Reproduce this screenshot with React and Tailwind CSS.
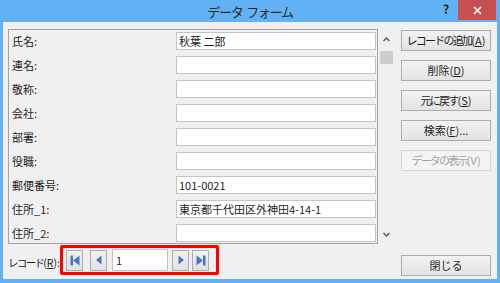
import React from "react";

const font = "font-['Noto_Sans_CJK_JP','Noto_Sans',sans-serif]";

const fields = [
  { label: "氏名:", value: "秋葉 二郎" },
  { label: "連名:", value: "" },
  { label: "敬称:", value: "" },
  { label: "会社:", value: "" },
  { label: "部署:", value: "" },
  { label: "役職:", value: "" },
  { label: "郵便番号:", value: "101-0021" },
  { label: "住所_1:", value: "東京都千代田区外神田4-14-1" },
  { label: "住所_2:", value: "" },
];

const Key = ({ children }) => <span className="underline underline-offset-1">{children}</span>;

// Japanese parts are narrower in the original UI font
const J = ({ children }) => <span className="tracking-[-0.16em]">{children}</span>;

const Button = ({ children, disabled }) => (
  <button
    className={
      disabled
        ? "h-[21px] w-[90px] whitespace-nowrap border border-[#d5d5d5] bg-[#f4f4f4] text-[11px] leading-none text-[#a3a3a3]"
        : "h-[21px] w-[90px] whitespace-nowrap border border-[#acacac] bg-gradient-to-b from-[#f2f2f2] to-[#e3e3e3] text-[11px] leading-none text-[#1e1e1e]"
    }
  >
    {children}
  </button>
);

const NavButton = ({ children }) => (
  <button className="flex h-[21px] w-[17px] items-center justify-center border border-[#acacac] bg-gradient-to-b from-[#f2f2f2] to-[#e1e1e1]">
    {children}
  </button>
);

const Chevron = ({ up }) => (
  <svg width="7" height="5" viewBox="0 0 7 5">
    <path
      d={up ? "M0.5 4 L3.5 1 L6.5 4" : "M0.5 1 L3.5 4 L6.5 1"}
      fill="none"
      stroke="#5a5a5a"
      strokeWidth="1.4"
    />
  </svg>
);

export default function App() {
  return (
    <div className={`flex h-[283px] w-[500px] flex-col bg-[#62b1f4] ${font}`}>
      {/* title bar */}
      <div className="relative flex h-[22px] shrink-0 items-center justify-center">
        <span className="flex gap-[4px] text-[13px] leading-none text-[#2a2a2a] tracking-[-0.1em]">
          <span>データ</span>
          <span>フォーム</span>
        </span>
        <span className="absolute left-[443px] top-[3px] text-[12px] font-bold leading-none text-[#222]">?</span>
        <div className="absolute left-[458px] top-0 flex h-[20px] w-[38px] items-center justify-center bg-[#c75050]">
          <svg width="9" height="9" viewBox="0 0 9 9">
            <path d="M1 1 L8 8 M8 1 L1 8" stroke="#fff" strokeWidth="1.6" />
          </svg>
        </div>
      </div>

      {/* body */}
      <div className="mx-[3px] mb-[4px] flex flex-1 bg-[#f0f0f0] pl-[5px] pt-[7px]">
        <div className="flex w-[393px] flex-col">
          <div className="flex">
            <div className="flex h-[215px] w-[370px] flex-col gap-[6px] border border-[#a3a3a3] pt-[2px] pl-[3px] pr-[1px]">
              {fields.map((f) => (
                <div key={f.label} className="flex h-[18px] items-center">
                  <span className="w-[164px] text-[11px] leading-none text-[#1e1e1e]">{f.label}</span>
                  <div className="flex h-[18px] w-[200px] items-center border border-[#c4c4c4] bg-white pl-[2px] text-[11px] leading-none text-[#1e1e1e]">
                    {f.value}
                  </div>
                </div>
              ))}
            </div>
            <div className="flex w-[16px] flex-col items-center pl-[1px]">
              <div className="mt-[7px] flex h-[6px] items-center">
                <Chevron up />
              </div>
              <div className="mt-[9px] h-[13px] w-[13px] bg-[#cdcdcd]" />
              <div className="flex-1" />
              <div className="mb-[7px] flex h-[6px] items-center">
                <Chevron />
              </div>
            </div>
          </div>

          <div className="mt-[1px] flex items-start">
            <span className="mt-[13px] w-[52px] shrink-0 whitespace-nowrap text-[10.5px] leading-none text-[#1e1e1e]">
              <J>レコード</J>(<Key>R</Key>):
            </span>
            <div className="flex h-[30px] w-[159px] items-center rounded-[2px] border-[3px] border-[#ff0000] pl-[3px]">
              <NavButton>
                <svg width="10" height="11" viewBox="0 0 10 11">
                  <rect x="0.5" y="0.5" width="2.5" height="10" fill="#3d7dbf" />
                  <path d="M9.5 0.5 L3 5.5 L9.5 10.5 Z" fill="#3d7dbf" />
                </svg>
              </NavButton>
              <div className="ml-[7px]">
                <NavButton>
                  <svg width="8" height="10" viewBox="0 0 8 10">
                    <path d="M6.5 0.5 L1 5 L6.5 9.5 Z" fill="#3d7dbf" />
                  </svg>
                </NavButton>
              </div>
              <div className="ml-[5px] flex h-[22px] w-[56px] items-center border border-[#c4c4c4] bg-white pl-[3px] text-[11px] leading-none text-[#1e1e1e]">
                1
              </div>
              <div className="ml-[4px]">
                <NavButton>
                  <svg width="8" height="10" viewBox="0 0 8 10">
                    <path d="M1.5 0.5 L7 5 L1.5 9.5 Z" fill="#3d7dbf" />
                  </svg>
                </NavButton>
              </div>
              <div className="ml-[3px]">
                <NavButton>
                  <svg width="10" height="11" viewBox="0 0 10 11">
                    <path d="M0.5 0.5 L7 5.5 L0.5 10.5 Z" fill="#3d7dbf" />
                    <rect x="7" y="0.5" width="2.5" height="10" fill="#3d7dbf" />
                  </svg>
                </NavButton>
              </div>
            </div>
          </div>
        </div>

        {/* right buttons */}
        <div className="flex flex-col pt-[1px]">
          <div className="flex flex-col gap-[9px]">
            <Button>
              <J>レコードの追加</J>(<Key>A</Key>)
            </Button>
            <Button>
              削除(<Key>D</Key>)
            </Button>
            <Button>
              <J>元に戻す</J>(<Key>S</Key>)
            </Button>
            <Button>
              検索(<Key>F</Key>)...
            </Button>
            <Button disabled>
              <J>データの表示</J>(V)
            </Button>
          </div>
          <div className="mt-[80px]">
            <Button>閉じる</Button>
          </div>
        </div>
      </div>
    </div>
  );
}
